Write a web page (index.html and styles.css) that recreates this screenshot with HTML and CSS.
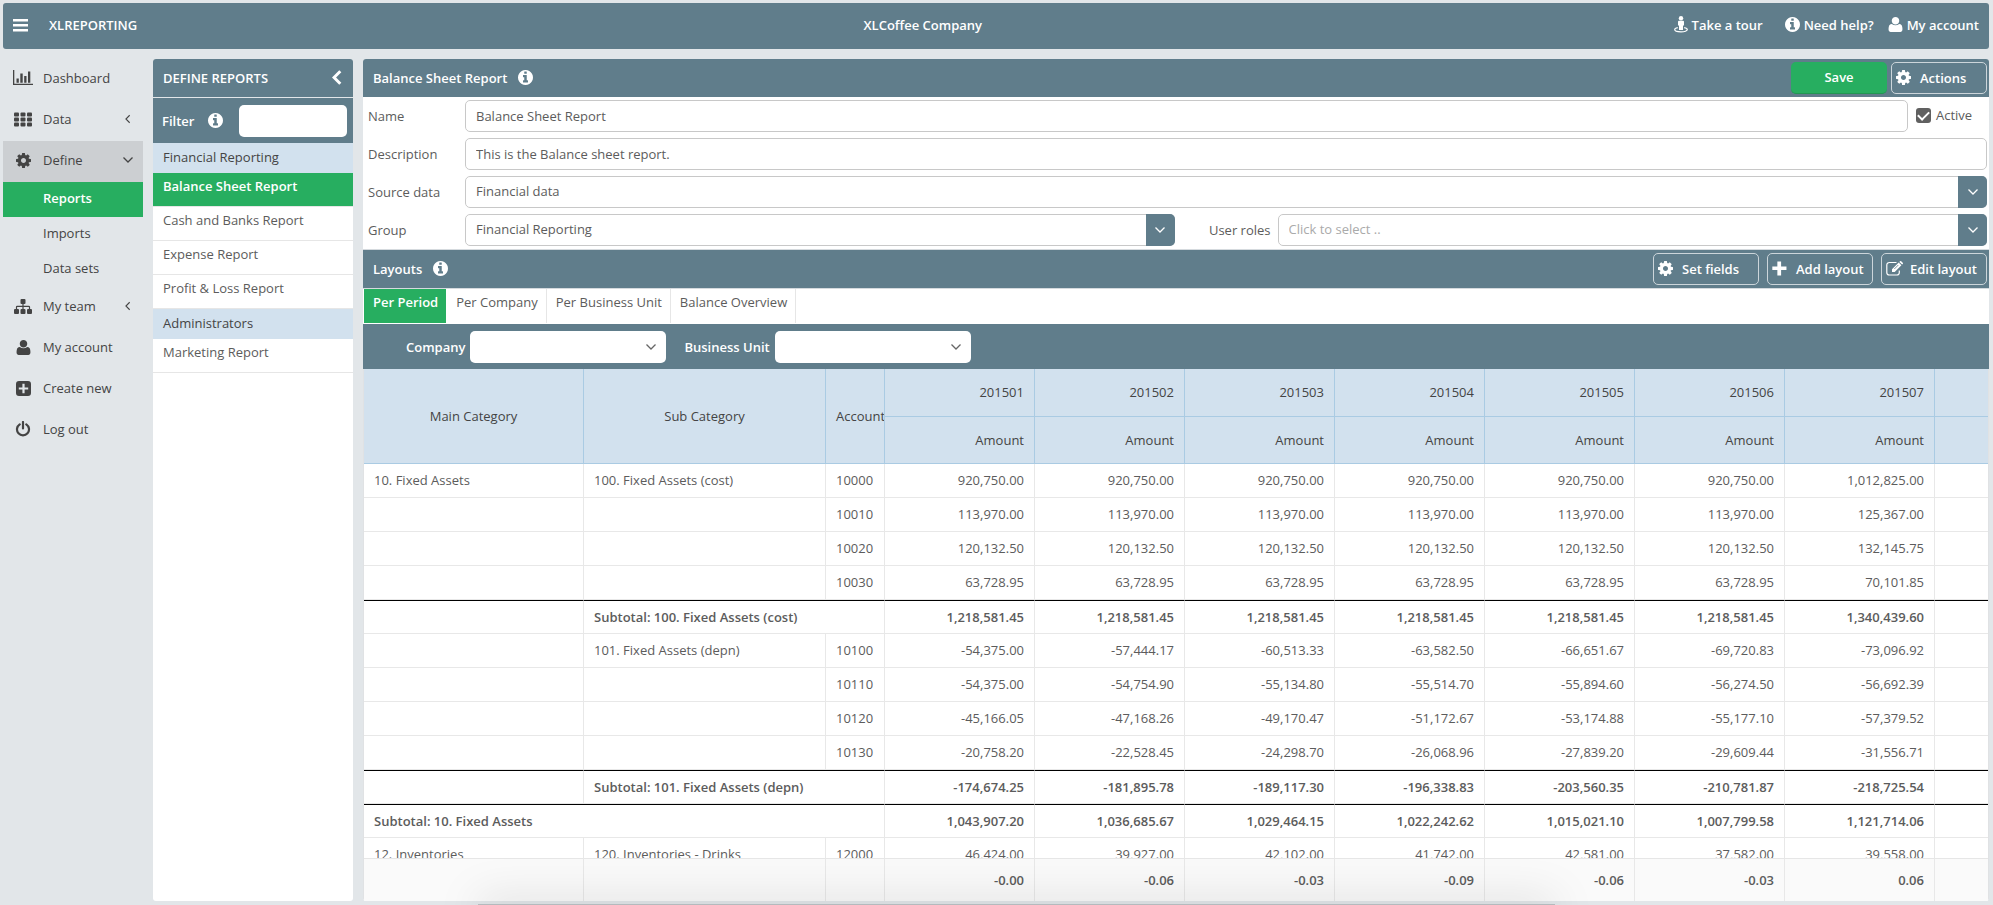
FILE: index.html
```html
<!DOCTYPE html>
<html lang="en">
<head>
<meta charset="utf-8">
<title>XLReporting</title>
<link rel="stylesheet" href="styles.css">
</head>
<body>
<svg class="sprite" aria-hidden="true">
  <symbol id="i-bars" viewBox="0 0 16 14"><path d="M0 1h15v2.500H0zM0 6h15v2.500H0zM0 11h15v2.500H0z"/></symbol>
  <symbol id="i-cog" viewBox="128 128 1536 1536"><path d="M1152 896q0-106-75-181t-181-75-181 75-75 181 75 181 181 75 181-75 75-181zm512-109v222q0 12-8 23t-20 13l-185 28q-19 54-39 91 35 50 107 138 10 12 10 25t-9 23q-27 37-99 108t-94 71q-12 0-26-9l-138-108q-44 23-91 38-16 136-29 186-7 28-36 28h-222q-14 0-24.500-8.500t-11.500-21.500l-28-184q-49-16-90-37l-141 107q-10 9-25 9-14 0-25-11-126-114-165-168-7-10-7-23 0-12 8-23 15-21 51-66.500t54-70.500q-27-50-41-99l-183-27q-13-2-21-12.500t-8-23.500v-222q0-12 8-23t19-13l186-28q14-46 39-92-40-57-107-138-10-12-10-24 0-10 9-23 26-36 98.500-107.500t94.500-71.500q13 0 26 10l138 107q44-23 91-38 16-136 29-186 7-28 36-28h222q14 0 24.500 8.500t11.500 21.500l28 184q49 16 90 37l142-107q9-9 24-9 13 0 25 10 129 119 165 170 7 8 7 22 0 12-8 23-15 21-51 66.500t-54 70.500q26 50 41 98l183 28q13 2 21 12.500t8 23.500z"/></symbol>
  <symbol id="i-info" viewBox="128 128 1536 1536"><path d="M1152 1376v-160q0-14-9-23t-23-9h-96v-512q0-14-9-23t-23-9h-320q-14 0-23 9t-9 23v160q0 14 9 23t23 9h96v320h-96q-14 0-23 9t-9 23v160q0 14 9 23t23 9h448q14 0 23-9t9-23zm-128-896v-160q0-14-9-23t-23-9h-192q-14 0-23 9t-9 23v160q0 14 9 23t23 9h192q14 0 23-9t9-23zm640 416q0 209-103 385.500t-279.500 279.500-385.500 103-385.500-103-279.500-279.500-103-385.500 103-385.500 279.500-279.500 385.500-103 385.500 103 279.500 279.500 103 385.500z"/></symbol>
  <symbol id="i-user" viewBox="128 128 1536 1536"><path d="M1606 1399q0 109-62.500 187t-150.500 78h-994q-88 0-150.500-78t-62.500-187q0-85 8.500-160.500t31.500-152 58.500-131 94-89 134.500-34.500q180 128 383 128t383-128q76 0 134.500 34.500t94 89 58.500 131 31.500 152 8.500 160.500zm-326-887q0 159-112.500 271.500t-271.500 112.500-271.500-112.500-112.500-271.500 112.500-271.500 271.500-112.500 271.500 112.500 112.500 271.500z"/></symbol>
  <symbol id="i-chart" viewBox="0 0 20 16"><path d="M0 0h1.300v13.700H20V15H0zM3.500 8.500h2.300v4.200H3.500zM7.300 3.500h2.400v9.200H7.300zM11.200 6h2.300v6.700h-2.300zM15 1.500h2.300v11.200H15z"/></symbol>
  <symbol id="i-th" viewBox="0 0 18 14"><g><rect width="5" height="4" rx="1"/><rect x="6.500" width="5" height="4" rx="1"/><rect x="13" width="5" height="4" rx="1"/><rect y="5" width="5" height="4" rx="1"/><rect x="6.500" y="5" width="5" height="4" rx="1"/><rect x="13" y="5" width="5" height="4" rx="1"/><rect y="10" width="5" height="4" rx="1"/><rect x="6.500" y="10" width="5" height="4" rx="1"/><rect x="13" y="10" width="5" height="4" rx="1"/></g></symbol>
  <symbol id="i-team" viewBox="0 0 18 15"><rect x="6.500" width="5" height="5" rx="1"/><rect y="10" width="5" height="5" rx="1"/><rect x="6.500" y="10" width="5" height="5" rx="1"/><rect x="13" y="10" width="5" height="5" rx="1"/><path d="M9 4v7M2.500 11V8q0-.7.7-.7h11.600q.7 0 .7.700v3" fill="none" stroke="currentColor" stroke-width="1.200"/></symbol>
  <symbol id="i-new" viewBox="0 0 15 15"><path fill-rule="evenodd" d="M3 0h9a3 3 0 0 1 3 3v9a3 3 0 0 1-3 3H3a3 3 0 0 1-3-3V3a3 3 0 0 1 3-3zM6.400 2.800v3.600H2.800v2.200h3.600v3.600h2.200V8.600h3.600V6.400H8.600V2.800z"/></symbol>
  <symbol id="i-power" viewBox="0 0 15 16"><path d="M4.200 3.300a6 6 0 1 0 6.600 0M7.500 1v6.500" fill="none" stroke="currentColor" stroke-width="2.200" stroke-linecap="round"/></symbol>
  <symbol id="i-plus" viewBox="0 0 14 14"><path d="M5 .5h3.500v4.700H13.500v3.300H8.500v5H5v-5H.3V5.200H5z"/></symbol>
  <symbol id="i-edit" viewBox="0 0 18 15"><path d="M10.500 1.500H3.300A2.500 2.500 0 0 0 .8 4v7.500A2.500 2.500 0 0 0 3.300 14h7.500a2.500 2.500 0 0 0 2.500-2.500V9.500" fill="none" stroke="currentColor" stroke-width="1.200"/><path d="M6 8.300 12.700 1.600l2.700 2.700L8.700 11H6zM13.400.9l.6-.6q.6-.6 1.200 0l1.500 1.500q.6.600 0 1.200l-.6.600z"/><path d="m8.300 8 4-4" stroke="#607d8b" stroke-width=".8"/></symbol>
  <symbol id="i-tour" viewBox="0 0 14 17"><circle cx="7" cy="2.200" r="2.200"/><path d="M5 4.800h4q1 0 1 1v3.700H9V14H5V9.500H4V5.800q0-1 1-1z"/><path d="M3.800 11.600C1.500 12 .7 12.800.7 13.600c0 1.300 2.800 2.300 6.300 2.300s6.300-1 6.300-2.300c0-.8-.8-1.600-3.100-2" fill="none" stroke="currentColor" stroke-width="1.200"/></symbol>
  <symbol id="i-down" viewBox="0 0 12 8"><path d="m1.500 1.500 4.500 4.500 4.500-4.500" fill="none" stroke="currentColor" stroke-width="1.300"/></symbol>
  <symbol id="i-left" viewBox="0 0 8 12"><path d="M6 1.500 1.500 6l4.500 4.500" fill="none" stroke="currentColor" stroke-width="1.300"/></symbol>
  <symbol id="i-back" viewBox="0 0 10 15"><path d="M8.300 1.200 2 7.500l6.300 6.300" fill="none" stroke="currentColor" stroke-width="3"/></symbol>
</svg>

<header class="topbar">
  <button class="plain" type="button" aria-label="Toggle menu"><svg class="icon i16"><use href="#i-bars"/></svg></button>
  <span class="brand">XLREPORTING</span>
  <span class="company">XLCoffee Company</span>
  <nav class="toplinks">
    <a class="tour" href="#"><svg class="icon tour-icon"><use href="#i-tour"/></svg>Take a tour</a>
    <a href="#"><svg class="icon i15"><use href="#i-info"/></svg>Need help?</a>
    <a href="#"><svg class="icon i15"><use href="#i-user"/></svg>My account</a>
  </nav>
</header>

<div class="workspace">
  <nav class="sidebar">
    <a class="side" href="#"><svg class="icon i20"><use href="#i-chart"/></svg><span>Dashboard</span></a>
    <a class="side" href="#"><svg class="icon i18"><use href="#i-th"/></svg><span>Data</span><svg class="icon arrow"><use href="#i-left"/></svg></a>
    <a class="side open" href="#"><svg class="icon i15"><use href="#i-cog"/></svg><span>Define</span><svg class="icon arrow"><use href="#i-down"/></svg></a>
    <a class="sub active" href="#">Reports</a>
    <a class="sub" href="#">Imports</a>
    <a class="sub" href="#">Data sets</a>
    <a class="side" href="#"><svg class="icon i18"><use href="#i-team"/></svg><span>My team</span><svg class="icon arrow"><use href="#i-left"/></svg></a>
    <a class="side" href="#"><svg class="icon i15"><use href="#i-user"/></svg><span>My account</span></a>
    <a class="side" href="#"><svg class="icon i15"><use href="#i-new"/></svg><span>Create new</span></a>
    <a class="side" href="#"><svg class="icon i16"><use href="#i-power"/></svg><span>Log out</span></a>
  </nav>

  <aside class="reports">
    <div class="bar"><h2>DEFINE REPORTS</h2><button class="plain" type="button" aria-label="Collapse"><svg class="icon back"><use href="#i-back"/></svg></button></div>
    <div class="filter"><label for="filter">Filter</label><svg class="icon i15"><use href="#i-info"/></svg><input id="filter" type="text"></div>
    <h3 class="group">Financial Reporting</h3>
    <a class="item active" href="#">Balance Sheet Report</a>
    <a class="item" href="#">Cash and Banks Report</a>
    <a class="item" href="#">Expense Report</a>
    <a class="item" href="#">Profit &amp; Loss Report</a>
    <h3 class="group">Administrators</h3>
    <a class="item" href="#">Marketing Report</a>
  </aside>

  <main class="content">
    <div class="bar">
      <h1>Balance Sheet Report</h1><svg class="icon i15"><use href="#i-info"/></svg>
      <div class="actions tight">
        <button class="btn save" type="button">Save</button>
        <button class="btn act" type="button"><svg class="icon i15"><use href="#i-cog"/></svg><span>Actions</span></button>
      </div>
    </div>
    <form class="form">
      <div class="row"><label for="name">Name</label><input id="name" class="field" type="text" value="Balance Sheet Report">
        <label class="check"><input type="checkbox" checked>Active</label></div>
      <div class="row"><label for="desc">Description</label><input id="desc" class="field" type="text" value="This is the Balance sheet report."></div>
      <div class="row"><label for="source">Source data</label><div class="combo"><select id="source"><option>Financial data</option></select><span class="drop"><svg class="icon chev"><use href="#i-down"/></svg></span></div></div>
      <div class="row"><label for="group">Group</label><div class="combo"><select id="group"><option>Financial Reporting</option></select><span class="drop"><svg class="icon chev"><use href="#i-down"/></svg></span></div>
        <label class="roles" for="roles">User roles</label><div class="combo"><select id="roles" class="empty"><option>Click to select ..</option></select><span class="drop"><svg class="icon chev"><use href="#i-down"/></svg></span></div></div>
    </form>
    <div class="bar layouts">
      <h2>Layouts</h2><svg class="icon i15"><use href="#i-info"/></svg>
      <div class="actions">
        <button class="btn wide" type="button"><svg class="icon i15"><use href="#i-cog"/></svg><span>Set fields</span></button>
        <button class="btn wide" type="button"><svg class="icon i15"><use href="#i-plus"/></svg><span>Add layout</span></button>
        <button class="btn wide" type="button"><svg class="icon i18"><use href="#i-edit"/></svg><span>Edit layout</span></button>
      </div>
    </div>
    <nav class="tabs">
      <button class="tab active" type="button">Per Period</button>
      <button class="tab" type="button">Per Company</button>
      <button class="tab" type="button">Per Business Unit</button>
      <button class="tab" type="button">Balance Overview</button>
    </nav>
    <div class="params">
      <label for="company">Company</label><div class="pick"><select id="company"><option></option></select><svg class="icon chev"><use href="#i-down"/></svg></div>
      <label for="unit">Business Unit</label><div class="pick"><select id="unit"><option></option></select><svg class="icon chev"><use href="#i-down"/></svg></div>
    </div>
    <div class="grid">
      <table>
        <colgroup><col class="c-main"><col class="c-sub"><col class="c-acc"><col class="c-num"><col class="c-num"><col class="c-num"><col class="c-num"><col class="c-num"><col class="c-num"><col class="c-num"><col></colgroup>
        <thead>
          <tr class="periods"><th rowspan="2">Main Category</th><th rowspan="2">Sub Category</th><th rowspan="2" class="acc">Account</th><th class="n">201501</th><th class="n">201502</th><th class="n">201503</th><th class="n">201504</th><th class="n">201505</th><th class="n">201506</th><th class="n">201507</th><th></th></tr>
          <tr><th class="n">Amount</th><th class="n">Amount</th><th class="n">Amount</th><th class="n">Amount</th><th class="n">Amount</th><th class="n">Amount</th><th class="n">Amount</th><th></th></tr>
        </thead>
        <tfoot>
          <tr><td></td><td></td><td></td><td>-0.00</td><td>-0.06</td><td>-0.03</td><td>-0.09</td><td>-0.06</td><td>-0.03</td><td>0.06</td><td></td></tr>
        </tfoot>
        <tbody>
          <tr><td class="t">10. Fixed Assets</td><td class="t">100. Fixed Assets (cost)</td><td class="t">10000</td><td>920,750.00</td><td>920,750.00</td><td>920,750.00</td><td>920,750.00</td><td>920,750.00</td><td>920,750.00</td><td>1,012,825.00</td><td></td></tr>
          <tr><td></td><td></td><td class="t">10010</td><td>113,970.00</td><td>113,970.00</td><td>113,970.00</td><td>113,970.00</td><td>113,970.00</td><td>113,970.00</td><td>125,367.00</td><td></td></tr>
          <tr><td></td><td></td><td class="t">10020</td><td>120,132.50</td><td>120,132.50</td><td>120,132.50</td><td>120,132.50</td><td>120,132.50</td><td>120,132.50</td><td>132,145.75</td><td></td></tr>
          <tr><td></td><td></td><td class="t">10030</td><td>63,728.95</td><td>63,728.95</td><td>63,728.95</td><td>63,728.95</td><td>63,728.95</td><td>63,728.95</td><td>70,101.85</td><td></td></tr>
          <tr class="total"><td></td><td class="t" colspan="2">Subtotal: 100. Fixed Assets (cost)</td><td>1,218,581.45</td><td>1,218,581.45</td><td>1,218,581.45</td><td>1,218,581.45</td><td>1,218,581.45</td><td>1,218,581.45</td><td>1,340,439.60</td><td></td></tr>
          <tr><td></td><td class="t">101. Fixed Assets (depn)</td><td class="t">10100</td><td>-54,375.00</td><td>-57,444.17</td><td>-60,513.33</td><td>-63,582.50</td><td>-66,651.67</td><td>-69,720.83</td><td>-73,096.92</td><td></td></tr>
          <tr><td></td><td></td><td class="t">10110</td><td>-54,375.00</td><td>-54,754.90</td><td>-55,134.80</td><td>-55,514.70</td><td>-55,894.60</td><td>-56,274.50</td><td>-56,692.39</td><td></td></tr>
          <tr><td></td><td></td><td class="t">10120</td><td>-45,166.05</td><td>-47,168.26</td><td>-49,170.47</td><td>-51,172.67</td><td>-53,174.88</td><td>-55,177.10</td><td>-57,379.52</td><td></td></tr>
          <tr><td></td><td></td><td class="t">10130</td><td>-20,758.20</td><td>-22,528.45</td><td>-24,298.70</td><td>-26,068.96</td><td>-27,839.20</td><td>-29,609.44</td><td>-31,556.71</td><td></td></tr>
          <tr class="total"><td></td><td class="t" colspan="2">Subtotal: 101. Fixed Assets (depn)</td><td>-174,674.25</td><td>-181,895.78</td><td>-189,117.30</td><td>-196,338.83</td><td>-203,560.35</td><td>-210,781.87</td><td>-218,725.54</td><td></td></tr>
          <tr class="total"><td class="t" colspan="3">Subtotal: 10. Fixed Assets</td><td>1,043,907.20</td><td>1,036,685.67</td><td>1,029,464.15</td><td>1,022,242.62</td><td>1,015,021.10</td><td>1,007,799.58</td><td>1,121,714.06</td><td></td></tr>
          <tr><td class="t">12. Inventories</td><td class="t">120. Inventories - Drinks</td><td class="t">12000</td><td>46,424.00</td><td>39,927.00</td><td>42,102.00</td><td>41,742.00</td><td>42,581.00</td><td>37,582.00</td><td>39,558.00</td><td></td></tr>
        </tbody>
      </table>
    </div>
  </main>
</div>
<div class="dock-shadow"></div>
</body>
</html>
```
FILE: styles.css
```css
* { box-sizing: border-box; }

body {
  margin: 0;
  height: 100vh;
  padding: 3px 4px 4px 3px;
  display: flex;
  flex-direction: column;
  gap: 10px;
  overflow: hidden;
  background: #e2e6e9;
  color: #5c5c5c;
  font: 13px/18px "Open Sans", "Noto Sans", sans-serif;
}

a { color: inherit; text-decoration: none; }
h1, h2, h3 { margin: 0; font-size: 13px; font-weight: 600; }
button, input, select { font: inherit; color: inherit; margin: 0; }

.sprite { position: absolute; width: 0; height: 0; }
.icon { fill: currentColor; flex: none; display: block; }
.i15 { width: 15px; height: 15px; }
.i16 { width: 16px; height: 16px; }
.i18 { width: 18px; height: 15px; }
.i20 { width: 20px; height: 16px; }
.plain { border: 0; background: none; padding: 0; color: #fff; }

.topbar {
  height: 46px;
  flex: none;
  display: flex;
  align-items: center;
  padding: 0 10px 3px;
  border-radius: 3px;
  background: #607d8b;
  color: #fff;
  font-weight: 600;
}
.brand { width: 123px; margin-left: 20px; }
.company { flex: 1; text-align: center; }
.toplinks { display: flex; gap: 14px; }
.toplinks a { display: flex; align-items: center; gap: 4px; }
.toplinks .tour { margin-right: 8px; }
.tour-icon { width: 14px; height: 17px; }

.workspace { flex: 1; min-height: 0; display: flex; gap: 10px; }

.sidebar { width: 140px; flex: none; color: #444; }
.side { height: 41px; padding-bottom: 3px; display: grid; grid-template-columns: 40px 1fr 30px; align-items: center; white-space: nowrap; }
.side > .icon:first-child { justify-self: center; }
.side.open { background: #cccfd2; }
.arrow { width: 12px; height: 10px; justify-self: center; }
.open .arrow { height: 8px; }
.sub { display: block; padding: 7px 0 10px 40px; }
.sub.active { background: #27ae60; color: #fff; font-weight: 600; }

.reports { width: 200px; flex: none; background: #fff; border-radius: 3px; overflow: hidden; }
.bar {
  height: 38px;
  flex: none;
  display: flex;
  align-items: center;
  gap: 11px;
  padding: 0 2px 1px 10px;
  background: #607d8b;
  color: #fff;
}
.reports .bar { justify-content: space-between; padding-right: 11px; }
.back { width: 10px; height: 15px; }
.filter {
  height: 46px;
  display: flex;
  align-items: center;
  gap: 14px;
  padding: 0 6px 0 9px;
  border-top: 1px solid #e2e6e9;
  background: #607d8b;
  color: #fff;
  font-weight: 600;
}
.filter input { width: 108px; margin-left: auto; height: 32px; border: 0; border-radius: 5px; background: #fff; }
.group { padding: 5px 10px 7px; background: #d2e1ee; color: #444; font-weight: 400; }
.item { display: block; padding: 4px 10px 11px; border-bottom: 1px solid #e6e6e6; }
.item.active { background: #27ae60; color: #fff; font-weight: 600; }

.content { flex: 1; min-width: 0; display: flex; flex-direction: column; background: #fff; border-radius: 3px; overflow: hidden; }
.actions { margin-left: auto; display: flex; gap: 8px; }
.actions.tight { gap: 4px; }
.btn {
  width: 96px;
  height: 32px;
  display: grid;
  grid-template-columns: 18px 1fr;
  gap: 6px;
  align-items: center;
  padding: 0 4px;
  border: 1px solid #ccd5da;
  border-radius: 5px;
  background: none;
  color: #fff;
  font-weight: 600;
  text-align: left;
}
.btn.wide { width: 106px; }
.btn.save { display: block; border: 0; border-bottom: 1px solid #229652; background: #27ae60; text-align: center; }

.form { padding: 3px 2px 3px 5px; display: grid; gap: 6px; border-bottom: 1px solid #d5dade; }
.row { display: flex; align-items: center; }
.row > label:first-child { width: 97px; flex: none; }
.field { flex: 1; min-width: 0; height: 32px; padding: 0 10px; border: 1px solid #c8c8c8; border-radius: 5px; background: #fff; }
.check { width: 79px; padding: 0 0 2px 8px; display: flex; align-items: center; gap: 5px; }
.check input { appearance: none; width: 15px; height: 15px; border-radius: 3px; background: #606060; display: grid; place-items: center; }
.check input::before { content: ""; width: 9px; height: 5px; border: solid #fff; border-width: 0 0 2px 2px; transform: translateY(-1px) rotate(-45deg); }
.combo { flex: 1; min-width: 0; height: 32px; display: flex; position: relative; }
.combo select { flex: 1; min-width: 0; appearance: none; padding: 0 40px 2px 10px; border: 1px solid #c8c8c8; border-radius: 5px; background: #fff; }
.combo select.empty { color: #aaa; }
.drop { position: absolute; top: 0; right: 0; bottom: 0; width: 29px; display: grid; place-items: center; border-radius: 0 5px 5px 0; background: #607d8b; color: #fff; pointer-events: none; }
.chev { width: 12px; height: 8px; }
.roles { width: 103px; flex: none; padding-right: 7px; text-align: right; }

.tabs { flex: none; display: flex; height: 36px; padding: 0 0 1px 1px; border-top: 1px solid #d5dade; }
.tab { padding: 0 8px 8px 9px; border: 0; border-right: 1px solid #e6e6e6; background: #fff; }
.tab.active { background: #27ae60; color: #fff; font-weight: 600; border-right-color: #fff; }

.params { height: 45px; flex: none; display: flex; align-items: center; gap: 5px; padding-left: 43px; background: #607d8b; color: #fff; font-weight: 600; }
.pick { width: 196px; height: 32px; display: flex; position: relative; margin-right: 13px; color: #666; }
.pick select { flex: 1; appearance: none; border: 0; border-radius: 5px; background: #fff; padding: 0 30px 0 10px; }
.pick .chev { position: absolute; right: 9px; top: 12px; pointer-events: none; }

.grid { flex: 1; min-height: 0; overflow: hidden; border: solid #e0e2e4; border-width: 0 1px; }
table { width: 100%; table-layout: fixed; border-collapse: separate; border-spacing: 0; }
.c-main { width: 220px; }
.c-sub { width: 242px; }
.c-acc { width: 59px; }
.c-num { width: 150px; }
th { height: 47px; padding: 0 0 1px; background: #d2e1ee; border: solid #aacbe3; border-width: 0 1px 1px 0; color: #444; font-weight: 400; text-align: center; white-space: nowrap; }
.periods th { height: 48px; }
th.acc { padding-left: 10px; text-align: left; overflow: hidden; }
th.n { padding-right: 10px; text-align: right; }
td { height: 34px; padding: 0 10px 2px; border: solid #e8e8e8; border-width: 0 1px 1px 0; text-align: right; white-space: nowrap; }
td.t { text-align: left; }
th:last-child, td:last-child { border-right: 0; }
.total td { padding-bottom: 0; border-top: 1px solid #000; font-weight: 600; }
tfoot { position: sticky; bottom: 0; }
tfoot td { height: 43px; padding-bottom: 0; background: #fafafa; border-top: 1px solid #e6e6e6; border-bottom: 0; font-weight: 600; }

/* Soft shadow along the bottom edge of the window */
.dock-shadow {
  position: fixed;
  left: 24%;
  right: 22%;
  bottom: -9px;
  height: 10px;
  background: #b4babd;
  box-shadow: 0 0 44px rgba(0, 0, 0, .28);
  pointer-events: none;
}
```
